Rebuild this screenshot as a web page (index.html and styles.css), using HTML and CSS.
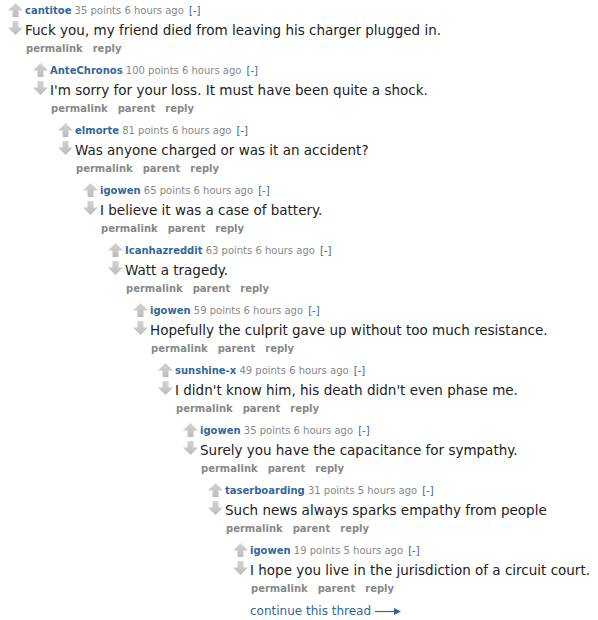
FILE: index.html
```html
<!DOCTYPE html>
<html lang="en">
<head>
    <meta charset="UTF-8">
    <title>Comments</title>
    <link rel="stylesheet" href="styles.css">
</head>
<body>
    <div class="thread" id="thread"></div>

    <svg width="0" height="0" style="position:absolute">
        <defs>
            <linearGradient id="arrowfill" x1="0" y1="0" x2="0" y2="1">
                <stop offset="0" stop-color="#d4d4d4"/>
                <stop offset="1" stop-color="#bcbcbc"/>
            </linearGradient>
            <symbol id="up" viewBox="0 0 15 14">
                <path d="M7.5 0 L15 7.5 L10.5 7.5 L10.5 14 L4.5 14 L4.5 7.5 L0 7.5 Z" fill="url(#arrowfill)"/>
            </symbol>
            <symbol id="down" viewBox="0 0 15 14">
                <path d="M7.5 14 L15 6.5 L10.5 6.5 L10.5 0 L4.5 0 L4.5 6.5 L0 6.5 Z" fill="url(#arrowfill)"/>
            </symbol>
        </defs>
    </svg>

    <script>
    var comments = [
        ['cantitoe', 35, '6 hours', 'Fuck you, my friend died from leaving his charger plugged in.'],
        ['AnteChronos', 100, '6 hours', "I'm sorry for your loss. It must have been quite a shock."],
        ['elmorte', 81, '6 hours', 'Was anyone charged or was it an accident?'],
        ['igowen', 65, '6 hours', 'I believe it was a case of battery.'],
        ['Icanhazreddit', 63, '6 hours', 'Watt a tragedy.'],
        ['igowen', 59, '6 hours', 'Hopefully the culprit gave up without too much resistance.'],
        ['sunshine-x', 49, '6 hours', "I didn't know him, his death didn't even phase me."],
        ['igowen', 35, '6 hours', 'Surely you have the capacitance for sympathy.'],
        ['taserboarding', 31, '5 hours', 'Such news always sparks empathy from people'],
        ['igowen', 19, '5 hours', 'I hope you live in the jurisdiction of a circuit court.']
    ];

    var parent = document.getElementById('thread');
    comments.forEach(function (c, i) {
        var el = document.createElement('div');
        el.className = 'comment';
        el.innerHTML = `
            <div class="midcol">
                <svg class="arrow"><use href="#up"/></svg>
                <svg class="arrow"><use href="#down"/></svg>
            </div>
            <div class="entry">
                <p class="tagline"><a class="author">${c[0]}</a> ${c[1]} points ${c[2]} ago <a class="expand">[-]</a></p>
                <div class="md">${c[3]}</div>
                <ul class="buttons">
                    <li>permalink</li>
                    ${i > 0 ? '<li>parent</li>' : ''}
                    <li>reply</li>
                </ul>
                <div class="child"></div>
            </div>
        `;
        parent.appendChild(el);
        parent = el.querySelector('.child');
    });

    var more = document.createElement('a');
    more.className = 'more';
    more.innerHTML = 'continue this thread <svg width="26" height="9" viewBox="0 0 26 9"><path d="M0 4.5 H20" stroke="#369" stroke-width="1.2"/><path d="M19 1 L26 4.5 L19 8 Z" fill="#369"/></svg>';
    parent.appendChild(more);
    </script>
</body>
</html>
```

FILE: styles.css
```css
body {
    margin: 0;
    padding: 0;
    background: #fff;
    font-family: "DejaVu Sans", Verdana, sans-serif;
    color: #222;
}

.comment {
    display: flex;
}

.midcol {
    width: 25px;
    flex-shrink: 0;
    padding-top: 3px;
}

.arrow {
    display: block;
    width: 15px;
    height: 14px;
    margin: 0 0 4px 8px;
}

.entry {
    flex-grow: 1;
}

.tagline {
    margin: 0;
    padding-top: 3px;
    font-size: 10px;
    line-height: 16px;
    color: #888;
}

.tagline .author {
    color: #369;
    font-weight: bold;
}

.tagline .expand {
    color: #369;
    margin-left: 2px;
}

.md {
    font-size: 13.5px;
    line-height: 22px;
    color: #222;
}

.buttons {
    list-style: none;
    margin: 0;
    padding: 0 0 3px 1px;
    display: flex;
    gap: 10px;
    font-size: 10px;
    font-weight: bold;
    line-height: 16px;
    color: #888;
}

.more {
    display: inline-flex;
    align-items: center;
    gap: 4px;
    margin-top: 4px;
    font-size: 12px;
    color: #369;
}
```
